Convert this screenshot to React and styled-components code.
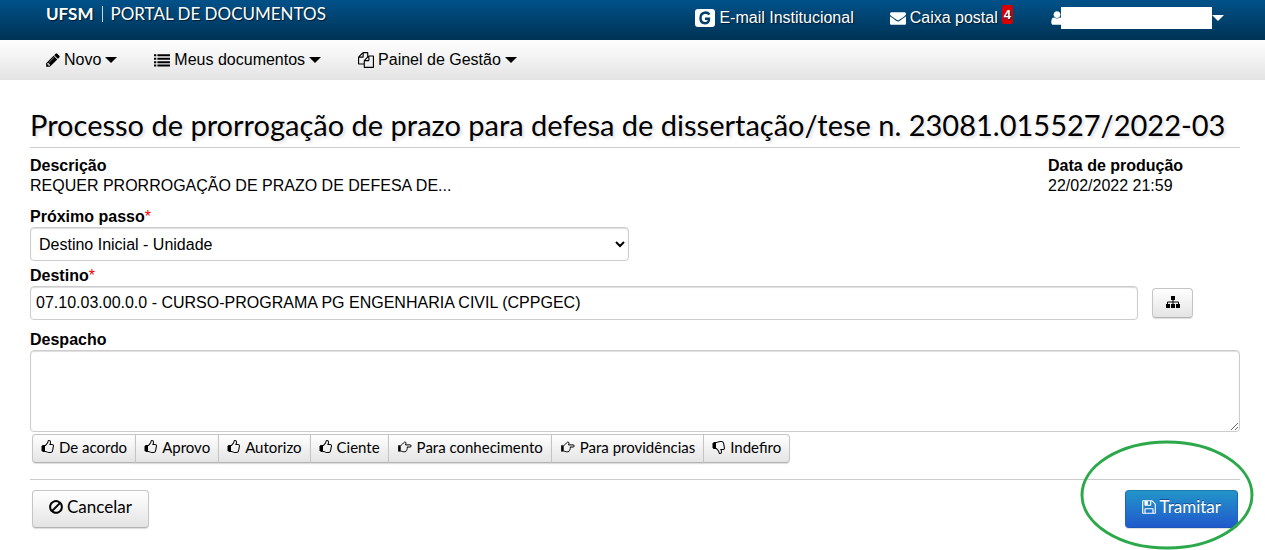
import React from "react";
import styled, { createGlobalStyle, css } from "styled-components";

const GlobalStyle = createGlobalStyle`
  * { box-sizing: border-box; }
  body {
    margin: 0;
    background: #fff;
    color: #000;
    font: 16px/20px "Liberation Sans", Arial, sans-serif;
  }
  button, input, select, textarea { font: inherit; color: inherit; margin: 0; }
`;

const display = css`
  font-family: Lato, "Open Sans", sans-serif;
`;

/* ---------- icons ---------- */

const Glyph = styled.svg`
  width: ${(p) => p.$width || 16}px;
  height: ${(p) => p.$height || 16}px;
  flex: none;
  fill: currentColor;
`;

const paths = {
  pencil:
    "M491 1536l91-91-235-235-91 91v107h128v128h107zm523-928q0-22-22-22-10 0-17 7l-542 542q-7 7-7 17 0 22 22 22 10 0 17-7l542-542q7-7 7-17zm-54-192l416 416-832 832h-416v-416zm683 96q0 53-37 90l-166 166-416-416 166-165q36-38 90-38 53 0 91 38l235 234q37 39 37 91z",
  list: "M0 256h256v224H0zM384 256h1408v224H384zM0 640h256v224H0zM384 640h1408v224H384zM0 1024h256v224H0zM384 1024h1408v224H384zM0 1408h256v224H0zM384 1408h1408v224H384z",
  files:
    "M1696 384q40 0 68 28t28 68v1216q0 40-28 68t-68 28h-960q-40 0-68-28t-28-68v-288h-544q-40 0-68-28t-28-68v-672q0-40 20-88t48-76l408-408q28-28 76-48t88-20h416q40 0 68 28t28 68v328q68-40 128-40h416zm-544 213l-299 299h299v-299zm-640-384l-299 299h299v-299zm196 647l316-316v-416h-384v416q0 40-28 68t-68 28h-416v640h512v-256q0-40 20-88t48-76zm956 804v-1152h-384v416q0 40-28 68t-68 28h-416v640h896z",
  envelope:
    "M1792 710v794q0 66-47 113t-113 47h-1472q-66 0-113-47t-47-113v-794q44 49 101 87 362 246 497 345 57 42 92.5 65.5t94.5 48 110 24.5h2q51 0 110-24.5t94.5-48 92.5-65.5q170-123 498-345 57-39 100-87zm0-294q0 79-49 151t-122 123q-376 261-468 325-10 7-42.5 31t-54 38.5-52 32.5-57.5 27-50 9h-2q-23 0-50-9t-57.5-27-52-32.5-54-38.5-42.5-31q-91-64-262-182.5t-205-142.5q-62-42-117-115.5t-55-136.5q0-78 41.5-130t118.5-52h1472q65 0 112.5 47t47.5 113z",
  user: "M1536 1399q0 109-62.5 187t-150.5 78h-854q-88 0-150.5-78t-62.5-187q0-85 8.5-160.5t31.5-152 58.5-131 94-89 134.5-34.5q131 128 313 128t313-128q76 0 134.5 34.5t94 89 58.5 131 31.5 152 8.5 160.5zm-256-887q0 159-112.5 271.5t-271.5 112.5-271.5-112.5-112.5-271.5 112.5-271.5 271.5-112.5 271.5 112.5 112.5 271.5z",
  sitemap:
    "M640 128h512v512H960v192h576q128 0 128 128v192h128v512H1280v-512h256V960H960v192h192v512H640v-512h192V960H256v192h256v512H0v-512h128V960q0-128 128-128h576V640H640z",
  ban: "M1440 893q0-161-87-295l-754 753q137 89 297 89 111 0 211.5-43.5t173.5-116.5 116-174.5 43-212.5zm-999 299l755-754q-135-91-300-91-148 0-273 73t-198 199-73 274q0 162 89 299zm1223-299q0 157-61 300t-163.5 246-245 164-298.5 61-298.5-61-245-164-163.5-246-61-300 61-299.5 163.5-245.5 245-164 298.5-61 298.5 61 245 164 163.5 245.5 61 299.5z",
  save: "M512 1536h768v-384h-768v384zm896 0h128v-896q0-14-10-38.5t-20-34.5l-281-281q-10-10-34-20t-39-10v416q0 40-28 68t-68 28h-576q-40 0-68-28t-28-68v-416h-128v1280h128v-416q0-40 28-68t68-28h832q40 0 68 28t28 68v416zm-384-928v-320q0-13-9.5-22.5t-22.5-9.5h-192q-13 0-22.5 9.5t-9.5 22.5v320q0 13 9.5 22.5t22.5 9.5h192q13 0 22.5-9.5t9.5-22.5zm640 32v928q0 40-28 68t-68 28h-1344q-40 0-68-28t-28-68v-1344q0-40 28-68t68-28h928q40 0 88 20t76 48l280 280q28 28 48 76t20 88z",
  thumb:
    "M256 1408q0-26-19-45t-45-19-45 19-19 45 19 45 45 19 45-19 19-45zm1280-640q0-51-39-89.5t-89-38.5h-352q0-58 48-159.5t48-160.5q0-98-32-145t-128-47q-26 26-38 85t-30.5 125.5-59.5 109.5q-22 23-77 91-4 5-23 30t-31.5 41-34.5 42.5-40 44-38.5 35.5-40 27-35.5 9h-32v640h32q13 0 31.5 3t33 6.5 38 11 35 11.5 35.5 12.5 29 10.5q211 73 342 73h121q192 0 192-167 0-26-5-56 30-16 47.5-52.5t17.5-73.5-18-69q53-50 53-119 0-25-10-55.5t-25-47.5q32-1 53.5-47t21.5-81zm128-1q0 89-49 163 9 33 9 69 0 77-38 144 3 21 3 43 0 101-60 178 1 139-85 219.5t-227 80.5h-129q-96 0-189.5-22.5t-216.5-65.5q-116-40-138-40h-288q-53 0-90.5-37.5t-37.5-90.5v-640q0-53 37.5-90.5t90.5-37.5h274q36-24 137-155 58-75 107-128 24-25 35.5-85.5t30.5-126.5 62-108q39-37 90-37 84 0 151 32.5t102 101.5 35 186q0 93-48 192h176q104 0 180 76t76 179z",
};

const narrow = ["pencil", "ban", "save"];

const Icon = ({ name, size = 16 }) =>
  narrow.includes(name) ? (
    <Glyph $width={14} viewBox="128 0 1536 1792" aria-hidden="true">
      <path d={paths[name]} />
    </Glyph>
  ) : (
    <Glyph $width={size} $height={size} viewBox="0 0 1792 1792" aria-hidden="true">
      <path d={paths[name]} />
    </Glyph>
  );

const Thumb = ({ down }) => (
  <Glyph $width={14} $height={14} viewBox="0 0 1792 1792" aria-hidden="true">
    <path d={paths.thumb} transform={down ? "matrix(1 0 0 -1 0 1792)" : undefined} />
    <path d={down ? "M64 384h256v640H64z" : "M64 768h256v640H64z"} />
  </Glyph>
);

const HandRight = () => (
  <Glyph viewBox="0 0 1792 1792" aria-hidden="true">
    <path d="M128 704h288v704H128z" />
    <path
      d="M416 704q90 0 180-110l150-170q60-84 140-84 120 0 120 130 0 90-60 190h510q130 0 130 120t-130 120h-340q70 60 40 150-20 40-50 60 40 100-20 160-20 20-50 30 0 130-160 130H760q-110 0-200-40-80-34-144-34"
      fill="none"
      stroke="currentColor"
      strokeWidth="112"
    />
  </Glyph>
);

const Caret = styled.span`
  border: solid transparent;
  border-width: 6px 6px 0;
  border-top-color: currentColor;
`;

/* ---------- top bars ---------- */

const TopBar = styled.header`
  display: flex;
  justify-content: space-between;
  height: 40px;
  padding: 0 41px 0 46px;
  color: #fff;
  text-shadow: 1px 1px 1px #001a30;
  background: linear-gradient(#005189, #003355);
`;

const Brand = styled.a`
  ${display}
  display: flex;
  align-items: center;
  gap: 8px;
  height: 28px;
  color: inherit;
  font-size: 17px;
  text-decoration: none;
`;

const BrandName = styled.strong`
  font-weight: 700;
`;

const Divider = styled.span`
  width: 1px;
  height: 16px;
  background: #c8d8e4;
`;

const Account = styled.nav`
  display: flex;
  align-items: center;
  height: 36px;
  gap: 36px;
`;

const AccountLink = styled.a`
  display: flex;
  align-items: center;
  gap: 4px;
  color: inherit;
  text-decoration: none;
`;

const Badge = styled.span`
  margin-bottom: 8px;
  padding: 0 2px;
  border-radius: 2px;
  background: #d90000;
  font-size: 13px;
  font-weight: 700;
  line-height: 19px;
`;

const UserButton = styled.button`
  display: flex;
  align-items: center;
  padding: 0;
  border: 0;
  background: none;
`;

const UserName = styled.span`
  width: 151px;
  height: 22px;
  margin-left: -4px;
  background: #fff;
`;

const MenuBar = styled.nav`
  display: flex;
  align-items: center;
  gap: 37px;
  height: 40px;
  padding: 0 46px;
  background: linear-gradient(#fff, #e3e3e3);
`;

const MenuButton = styled.button`
  display: flex;
  align-items: center;
  gap: 4px;
  padding: 0;
  border: 0;
  background: none;
`;

/* ---------- page ---------- */

const Page = styled.main`
  padding: 25px 25px 22px 30px;
`;

const Title = styled.h1`
  ${display}
  margin: 0 0 8px;
  padding-bottom: 2px;
  border-bottom: 1px solid #ccc;
  font-size: 29px;
  font-weight: 400;
  line-height: 40px;
  text-shadow: 2px 2px 3px #ddd;
`;

const Summary = styled.dl`
  display: flex;
  justify-content: space-between;
  margin: 0 0 11px;
`;

const SummaryItem = styled.div`
  min-width: 192px;
`;

const Term = styled.dt`
  font-weight: 700;
`;

const Detail = styled.dd`
  margin: 0;
`;

const Field = styled.div`
  display: flex;
  flex-direction: column;
  margin-bottom: ${(p) => p.$space || 0}px;
`;

const Label = styled.label`
  font-weight: 700;
`;

const Required = styled.span`
  color: #e00;
  font-weight: 400;
`;

const control = css`
  width: 100%;
  border: 1px solid #ccc;
  border-radius: 4px;
  background-color: #fff;
  box-shadow: inset 0 1px 1px #ddd;
`;

const Select = styled.select`
  ${control}
  width: 599px;
  max-width: 100%;
  height: 34px;
  padding: 0 4px;
`;

const Input = styled.input`
  ${control}
  flex: 1;
  height: 34px;
  padding: 0 5px;
`;

const TextArea = styled.textarea`
  ${control}
  display: block;
  height: 82px;
  resize: vertical;
`;

const InputRow = styled.div`
  display: flex;
  align-items: center;
  gap: 14px;
  padding-right: 47px;
`;

const Button = styled.button`
  ${display}
  display: flex;
  align-items: center;
  justify-content: center;
  gap: 4px;
  height: 38px;
  padding: 0 16px 4px;
  border: 1px solid #c5c5c5;
  border-bottom-color: #b3b3b3;
  border-radius: 4px;
  background: linear-gradient(#fff, #e4e4e4);
  box-shadow: 0 1px 1px #ddd;
  font-size: 17px;
  ${(p) =>
    p.$primary &&
    css`
      color: #fff;
      border-color: #1c7ea8 #1f62c4 #1c55b8;
      background: linear-gradient(#2295c9, #2159cc);
      text-shadow: 0 -1px 0 #1a4a90;
    `}
`;

const IconButton = styled(Button)`
  width: 41px;
  height: 30px;
  padding: 0 0 2px;
`;

const ButtonGroup = styled.div`
  display: flex;
  padding: 2px 2px 16px;
`;

const GroupButton = styled(Button)`
  height: 29px;
  padding: 0 8px 4px;
  border-radius: 0;
  font-size: 15px;
  & + & { margin-left: -1px; }
  &:first-child { border-radius: 4px 0 0 4px; }
  &:last-child { border-radius: 0 4px 4px 0; }
`;

const Actions = styled.footer`
  display: flex;
  justify-content: space-between;
  padding: 10px 2px 0;
  border-top: 1px solid #ccc;
`;

const Highlighted = styled.div`
  position: relative;
`;

const Ring = styled.svg`
  position: absolute;
  top: -51px;
  right: -16px;
  width: 174px;
  height: 111px;
  pointer-events: none;
`;

const menus = [
  ["pencil", "Novo"],
  ["list", "Meus documentos"],
  ["files", "Painel de Gestão"],
];

const replies = [
  ["De acordo", "up"],
  ["Aprovo", "up"],
  ["Autorizo", "up"],
  ["Ciente", "up"],
  ["Para conhecimento", "right"],
  ["Para providências", "right"],
  ["Indefiro", "down"],
];

const ReplyIcon = ({ kind }) =>
  kind === "right" ? <HandRight /> : <Thumb down={kind === "down"} />;

export default function App() {
  return (
    <>
      <GlobalStyle />
      <TopBar>
        <Brand href="#">
          <BrandName>UFSM</BrandName>
          <Divider />
          <span>PORTAL DE DOCUMENTOS</span>
        </Brand>
        <Account>
          <AccountLink href="#">
            <Glyph $width={20} $height={20} viewBox="0 0 20 20" aria-hidden="true">
              <rect x="0" y="1" width="20" height="18" rx="3" />
              <path
                d="M14.500 6.500Q13 4.500 10.500 4.500Q5.500 5 5.500 10Q5.500 15.300 10.200 15.300Q14 15.300 14 10.800H10"
                fill="none"
                stroke="#00406d"
                strokeWidth="2.400"
              />
            </Glyph>
            E-mail Institucional
          </AccountLink>
          <AccountLink href="#">
            <Icon name="envelope" />
            Caixa postal
            <Badge>4</Badge>
          </AccountLink>
          <UserButton aria-label="Conta">
            <Icon name="user" />
            <UserName />
            <Caret />
          </UserButton>
        </Account>
      </TopBar>
      <MenuBar>
        {menus.map(([icon, text]) => (
          <MenuButton key={text}>
            <Icon name={icon} />
            {text}
            <Caret />
          </MenuButton>
        ))}
      </MenuBar>
      <Page>
        <Title>
          Processo de prorrogação de prazo para defesa de dissertação/tese n. 23081.015527/2022-03
        </Title>
        <Summary>
          <SummaryItem>
            <Term>Descrição</Term>
            <Detail>REQUER PRORROGAÇÃO DE PRAZO DE DEFESA DE...</Detail>
          </SummaryItem>
          <SummaryItem>
            <Term>Data de produção</Term>
            <Detail>22/02/2022 21:59</Detail>
          </SummaryItem>
        </Summary>
        <Field $space={5}>
          <Label htmlFor="passo">
            Próximo passo<Required>*</Required>
          </Label>
          <Select id="passo">
            <option>Destino Inicial - Unidade</option>
          </Select>
        </Field>
        <Field $space={10}>
          <Label htmlFor="destino">
            Destino<Required>*</Required>
          </Label>
          <InputRow>
            <Input
              id="destino"
              defaultValue="07.10.03.00.0.0 - CURSO-PROGRAMA PG ENGENHARIA CIVIL (CPPGEC)"
            />
            <IconButton type="button" aria-label="Escolher unidade">
              <Icon name="sitemap" size={14} />
            </IconButton>
          </InputRow>
        </Field>
        <Field>
          <Label htmlFor="despacho">Despacho</Label>
          <TextArea id="despacho" />
        </Field>
        <ButtonGroup>
          {replies.map(([text, kind]) => (
            <GroupButton type="button" key={text}>
              <ReplyIcon kind={kind} />
              {text}
            </GroupButton>
          ))}
        </ButtonGroup>
        <Actions>
          <Button type="button">
            <Icon name="ban" />
            Cancelar
          </Button>
          <Highlighted>
            <Button type="submit" $primary>
              <Icon name="save" />
              Tramitar
            </Button>
            <Ring viewBox="0 0 174 111" aria-hidden="true">
              <ellipse cx="87" cy="56" rx="85" ry="53" fill="none" stroke="#2ba84a" strokeWidth="3" />
            </Ring>
          </Highlighted>
        </Actions>
      </Page>
    </>
  );
}
